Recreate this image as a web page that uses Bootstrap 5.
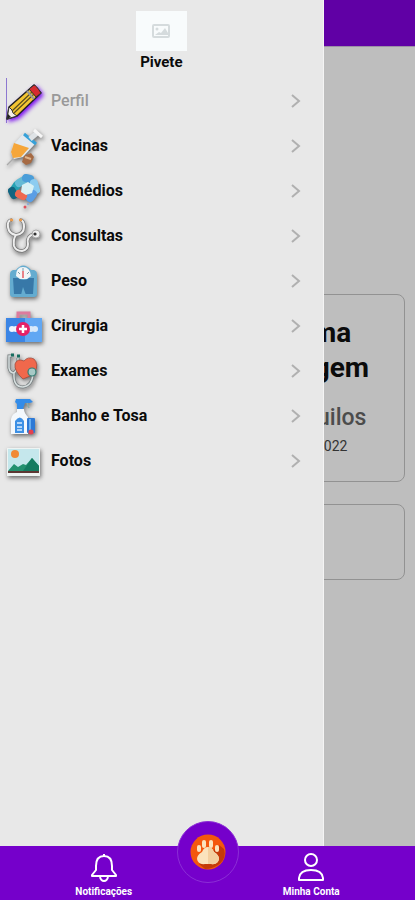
<!DOCTYPE html>
<html lang="pt-BR">
<head>
<meta charset="utf-8">
<meta name="viewport" content="width=device-width, initial-scale=1">
<title>Pivete</title>
<link rel="stylesheet" href="https://cdn.jsdelivr.net/npm/bootstrap@5.3.0/dist/css/bootstrap.min.css">
<style>
body { font-family: Roboto, "Liberation Sans", sans-serif; background: #bebebe; color: #0b0b0b; }
.app-top { height: 47px; background: #6000a5; border-bottom: 1px solid #9c8fa6; }
.summary { padding: 247px 10px 90px; }
.panel { border: 1px solid #929292; border-radius: 8px; }
.panel-weight { width: 48%; min-height: 188px; padding: 20px 0; }
.panel-weight h2 { font-size: 28px; line-height: 35px; font-weight: 700; margin: 0 0 16px; }
.kilos { font-size: 23px; line-height: 34px; font-weight: 500; color: #4c4c4c; }
.when { font-size: 14px; line-height: 22px; color: #333; }
.panel-empty { min-height: 76px; margin-top: 22px; }
.drawer { width: 78vw; background: #e8e8e8; border-right: 1px solid #f4f4f4; z-index: 10; padding-top: 11px; }
.pet-photo { width: 51px; height: 40px; background: #f8fbfc; }
.pet-name { font-size: 15px; line-height: 22px; font-weight: 700; margin-bottom: 5px; }
.menu-row { height: 45px; padding: 0 22px 0 5px; font-size: 16px; font-weight: 700; color: #0b0b0b; }
.menu-row span { margin-left: 8px; }
.menu-row.active-row { color: #999; font-weight: 500; }
.active-row::before { content: ""; position: absolute; left: 6px; top: 0; bottom: 0; border-left: 1px solid #8d78d0; }
.pic { width: 38px; height: 38px; overflow: visible; filter: drop-shadow(1px 2px 2px rgba(0,0,0,.55)); }
.active-row .pic { filter: drop-shadow(2px 2px 2px #7a10f0); }
.bottom-bar { background: #7500cb; height: 54px; z-index: 20; }
.bottom-bar .tab { color: #fff; font-size: 10px; line-height: 12px; font-weight: 700; padding-top: 6px; }
.paw-btn { width: 62px; height: 62px; top: -25px; background: #7500cb; border: 1px solid #8c2ed6; padding: 0; }
</style>
<script src="https://cdn.jsdelivr.net/npm/bootstrap@5.3.0/dist/js/bootstrap.bundle.min.js"></script>
</head>
<body class="min-vh-100">
<header class="app-top"></header>
<main class="summary">
  <section class="panel panel-weight ms-auto text-center">
    <h2>Última<br>Pesagem</h2>
    <div class="kilos">10,5 quilos</div>
    <div class="when">20/10/2022</div>
  </section>
  <section class="panel panel-empty"></section>
</main>

<aside class="drawer position-fixed top-0 bottom-0 start-0">
  <div class="d-flex flex-column align-items-center">
    <div class="pet-photo d-flex align-items-center justify-content-center">
      <svg width="18" height="14" viewBox="0 0 18 14" fill="none" stroke="#d5dbdd" stroke-width="2"><rect x="1" y="1" width="16" height="12" rx="1"/><circle cx="5" cy="5" r="1.5" fill="#d5dbdd" stroke="none"/><path d="M3 11l4-3 2 1 4-5 3 5v2z" fill="#d5dbdd" stroke="none"/></svg>
    </div>
    <div class="pet-name">Pivete</div>
  </div>
  <nav>
    <a href="#" class="menu-row active-row position-relative d-flex align-items-center text-decoration-none">
      <svg class="pic" viewBox="0 0 38 38"><path d="M2 37L4 25 29 3l7 8-24 23z" fill="#f4c531" stroke="#222" stroke-width="1.5" stroke-linejoin="round"/><path d="M24 7l5-4q2 0 7 8l-5 4z" fill="#d62b30" stroke="#333"/><path d="M2 37L4 25l3 3 1 3 4 3z" fill="#f4efe9" stroke="#333"/><path d="M2 37l1-5 3 3z" fill="#222"/><path d="M7 29L27 10M9 31L29 12" stroke="#594d1d" stroke-width="1.2"/><path d="M22 9l7 8" stroke="#999" stroke-width="2"/></svg>
      <span>Perfil</span>
      <svg class="ms-auto" width="10" height="16" viewBox="0 0 10 16" fill="none" stroke="#b0b0b0" stroke-width="2"><path d="M1 2l7 6-7 6"/></svg>
    </a>
    <a href="#" class="menu-row d-flex align-items-center text-decoration-none">
      <svg class="pic" viewBox="0 0 38 38"><path d="M2 38l9-9" stroke="#aaa" stroke-width="1.2"/><path d="M19 29l7-3 3 4-3 6-5 2-4-3z" fill="#a66a43"/><path d="M20 30l6 2" stroke="#ddb38b" stroke-width="2"/><path d="M18 7l12 10-12 13-9 2-3-6 2-8z" fill="#e3e9ee"/><path d="M9 16l15 5-8 9-8 1-2-6z" fill="#f5a63a"/><path d="M19 7l12 10" stroke="#36a1d9" stroke-width="3"/><path d="M25 12l7-6" stroke="#dfe3e6" stroke-width="5"/><path d="M29 3l8 7" stroke="#f6f6f6" stroke-width="3"/></svg>
      <span>Vacinas</span>
      <svg class="ms-auto" width="10" height="16" viewBox="0 0 10 16" fill="none" stroke="#b0b0b0" stroke-width="2"><path d="M1 2l7 6-7 6"/></svg>
    </a>
    <a href="#" class="menu-row d-flex align-items-center text-decoration-none">
      <svg class="pic" viewBox="0 0 38 38"><g stroke-linecap="round" stroke-width="8" fill="none"><path d="M8 19l4-6" stroke="#27a2b3"/><path d="M14 11l7-4" stroke="#65bbd5"/><path d="M21 6l4 1" stroke="#4b9ed9"/><path d="M29 11l2 7" stroke="#8cccf0"/><path d="M28 22l-3 4" stroke="#5a9ee5"/><path d="M7 19l2 4" stroke="#126581"/><path d="M14 22l4 2" stroke="#ee6951"/></g><path d="M17 13l6-3 6 4-2 7-6 2-5-3z" fill="#d8f1f5"/><circle cx="20" cy="35" r="1.5" fill="#df505d"/><circle cx="23" cy="32" r="1" fill="#81a8dd"/></svg>
      <span>Remédios</span>
      <svg class="ms-auto" width="10" height="16" viewBox="0 0 10 16" fill="none" stroke="#b0b0b0" stroke-width="2"><path d="M1 2l7 6-7 6"/></svg>
    </a>
    <a href="#" class="menu-row d-flex align-items-center text-decoration-none">
      <svg class="pic" viewBox="0 0 38 38" fill="none"><path d="M7 3Q2 3 3 10t8 8q8-1 8-8t-4-7M11 18q-3 4-2 11 2 5 8 5 6-1 6-7-2-8 6-10" stroke="#777" stroke-width="3.4"/><path d="M7 3Q2 3 3 10t8 8q8-1 8-8t-4-7M11 18q-3 4-2 11 2 5 8 5 6-1 6-7-2-8 6-10" stroke="#eee" stroke-width="2"/><path d="M5 3h3M14 3h3" stroke="#e99b4e" stroke-width="2.5"/><circle cx="31" cy="17" r="4" fill="#f1f1f1" stroke="#aaa"/><circle cx="30" cy="17" r="1.6" fill="#333"/></svg>
      <span>Consultas</span>
      <svg class="ms-auto" width="10" height="16" viewBox="0 0 10 16" fill="none" stroke="#b0b0b0" stroke-width="2"><path d="M1 2l7 6-7 6"/></svg>
    </a>
    <a href="#" class="menu-row d-flex align-items-center text-decoration-none">
      <svg class="pic" viewBox="0 0 38 38"><path d="M8 8h3q7-9 15 0h3q3 1 3 4v20q0 3-3 3H8q-3 0-3-3V12q0-3 3-4z" fill="#64acd0"/><path d="M8 16h5q6 4 11 0h5l-1 16H9z" fill="#3778a8"/><path d="M16 33l2-8 3 8z" fill="#64acd0"/><path d="M11 14q0-9 7-9t8 9l-4 3h-7z" fill="#f2f5f7"/><path d="M13 10l2 2M18 6v3M24 10l-2 2" stroke="#799ba9"/><path d="M18 16V9" stroke="#e35b64" stroke-width="1.5"/></svg>
      <span>Peso</span>
      <svg class="ms-auto" width="10" height="16" viewBox="0 0 10 16" fill="none" stroke="#b0b0b0" stroke-width="2"><path d="M1 2l7 6-7 6"/></svg>
    </a>
    <a href="#" class="menu-row d-flex align-items-center text-decoration-none">
      <svg class="pic" viewBox="0 0 38 38"><path d="M13 12V6h11v6" fill="none" stroke="#dd7b9d" stroke-width="3"/><path d="M1 11h36v24H1z" fill="#3b85e5"/><path d="M20 11h17v24H20z" fill="#61a7f3"/><circle cx="7" cy="22" r="3" fill="#f0f6ff"/><circle cx="11" cy="22" r="3" fill="#f0f6ff"/><circle cx="26" cy="22" r="3" fill="#d8e9fa"/><circle cx="30" cy="22" r="3" fill="#d8e9fa"/><circle cx="18" cy="22" r="7" fill="#e62167"/><path d="M18 18v8M14 22h8" stroke="#fff" stroke-width="2.5"/></svg>
      <span>Cirurgia</span>
      <svg class="ms-auto" width="10" height="16" viewBox="0 0 10 16" fill="none" stroke="#b0b0b0" stroke-width="2"><path d="M1 2l7 6-7 6"/></svg>
    </a>
    <a href="#" class="menu-row d-flex align-items-center text-decoration-none">
      <svg class="pic" viewBox="0 0 38 38"><path d="M7 4H4v12q1 5 5 5l4-5V6M9 21q-1 14 9 14 9-1 10-13" fill="none" stroke="#727b7d" stroke-width="3"/><path d="M7 4H4v12q1 5 5 5l4-5V6M9 21q-1 14 9 14 9-1 10-13" fill="none" stroke="#d6dede" stroke-width="1.5"/><path d="M6 3h3M12 4h3" stroke="#176e60" stroke-width="3"/><path d="M18 27Q9 19 10 12q2-6 9-3 4-5 10-2 5 5 1 13-5 5-12 7z" fill="#f0684c" stroke="#9d4537" stroke-width=".7"/><circle cx="27" cy="20" r="4" fill="#a7c9c6" stroke="#327d73" stroke-width="1.2"/></svg>
      <span>Exames</span>
      <svg class="ms-auto" width="10" height="16" viewBox="0 0 10 16" fill="none" stroke="#b0b0b0" stroke-width="2"><path d="M1 2l7 6-7 6"/></svg>
    </a>
    <a href="#" class="menu-row d-flex align-items-center text-decoration-none">
      <svg class="pic" viewBox="0 0 38 38"><path d="M11 2h14l3 3-3 1h-5l-2 6h-6V7l-2-2z" fill="#338ce8"/><path d="M22 6l2 5" stroke="#8aa" stroke-width="1.5"/><path d="M12 12h7q0 4 4 8v17H6V22q1-5 6-7z" fill="#f4f8fc"/><path d="M10 24q5-7 9 0v12h-9z" fill="#3d90e5"/><path d="M12 26h5M12 30h5M12 33h5" stroke="#d9ecff" stroke-width="1.5"/><rect x="22" y="21" width="8" height="15" rx="1" fill="#2d79d6"/><path d="M25 22v11" stroke="#65adf0" stroke-width="2"/><circle cx="26" cy="35" r="2.5" fill="#e4414e"/></svg>
      <span>Banho e Tosa</span>
      <svg class="ms-auto" width="10" height="16" viewBox="0 0 10 16" fill="none" stroke="#b0b0b0" stroke-width="2"><path d="M1 2l7 6-7 6"/></svg>
    </a>
    <a href="#" class="menu-row d-flex align-items-center text-decoration-none">
      <svg class="pic" viewBox="0 0 38 38"><rect x="2" y="6" width="33" height="28" fill="#eef4f3"/><rect x="3" y="7" width="31" height="22" fill="#c5e7ec"/><circle cx="10" cy="12" r="4" fill="#f18a35"/><path d="M3 29l6-7 4 3 5-3 3 1 6-7 7 8v5z" fill="#23916f"/><path d="M18 29l9-13 7 8v5z" fill="#137b60"/><path d="M3 30h31" stroke="#5c3733" stroke-width="2"/></svg>
      <span>Fotos</span>
      <svg class="ms-auto" width="10" height="16" viewBox="0 0 10 16" fill="none" stroke="#b0b0b0" stroke-width="2"><path d="M1 2l7 6-7 6"/></svg>
    </a>
  </nav>
</aside>

<nav class="bottom-bar fixed-bottom d-flex">
  <a href="#" class="tab w-50 d-flex flex-column align-items-center text-decoration-none">
    <svg class="mb-1" width="26" height="30" viewBox="0 0 26 30" fill="none" stroke="#fff" stroke-width="2" stroke-linejoin="round"><path d="M13 2v2M5 14q0-10 8-10t8 10v4l4 5v1H1v-1l4-5zM9 25q1 4 4 4t4-4"/></svg>
    Notificações
  </a>
  <a href="#" class="tab w-50 d-flex flex-column align-items-center text-decoration-none">
    <svg class="mb-1" width="26" height="30" viewBox="0 0 26 30" fill="none" stroke="#fff" stroke-width="2" stroke-linejoin="round"><circle cx="13" cy="8" r="6"/><path d="M1 28v-2q1-8 12-8t12 8v2z"/></svg>
    Minha Conta
  </a>
  <button type="button" class="paw-btn rounded-circle position-absolute start-50 translate-middle-x d-flex align-items-center justify-content-center" aria-label="Pets">
    <svg width="36" height="36" viewBox="0 0 36 36"><circle cx="18" cy="18" r="17.5" fill="#f4570d"/><path d="M29 11l5 4q3 10-6 16-6 4-13 4l-6-5z" fill="#c43a08"/><g fill="#fbe3bd"><rect x="7" y="11" width="4" height="7" rx="2"/><rect x="12" y="6" width="4" height="8" rx="2"/><rect x="19" y="6" width="4" height="8" rx="2"/><rect x="25" y="11" width="4" height="7" rx="2"/><path d="M18 13q4 0 6 5 5 3 5 7-1 6-8 5h-6q-7 1-8-5 0-4 5-7 2-5 6-5z"/></g><path d="M18 13q4 0 6 5 5 3 5 7-1 6-8 5h-3z" fill="#f3cf9f"/></svg>
  </button>
</nav>
</body>
</html>
